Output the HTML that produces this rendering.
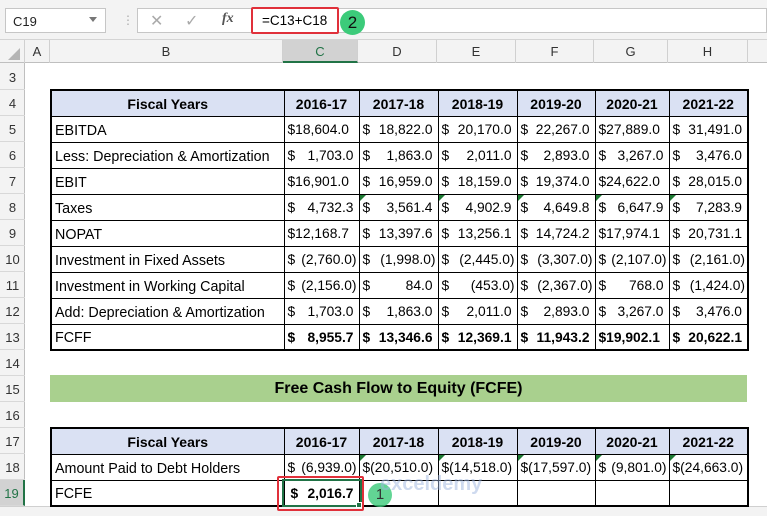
<!DOCTYPE html>
<html><head><meta charset="utf-8"><style>
*{box-sizing:border-box;margin:0;padding:0}
body{width:767px;height:516px;overflow:hidden;background:#fff;font-family:"Liberation Sans",sans-serif;position:relative}
.abs{position:absolute}
.top{left:0;top:0;width:767px;height:40px;background:#f3f3f3;border-bottom:1px solid #d4d4d4}
.namebox{left:5px;top:8px;width:101px;height:25px;background:#fff;border:1px solid #c6c6c6;font-size:13px;padding:5px 0 0 7px;color:#222}
.fbox{left:137px;top:8px;width:630px;height:25px;background:#fff;border:1px solid #c6c6c6}
.colhdr{left:0;top:40px;width:767px;height:23px;background:#f3f3f3;border-bottom:1px solid #bfbfbf}
.ch{position:absolute;top:40px;height:23px;border-right:1px solid #d0d0d0;font-size:13px;color:#333;text-align:center;line-height:23px}
.rowhdr{left:0;top:63px;width:25px;height:453px;background:#f3f3f3;border-right:1px solid #bfbfbf}
.rh{position:absolute;left:0;width:25px;height:26px;border-bottom:1px solid #d8d8d8;font-size:13px;color:#333;text-align:center;line-height:28px}
table{position:absolute;border-collapse:collapse;table-layout:fixed;font-size:14.3px;color:#000}
td{height:26px;border:1px solid #000;padding:3px 3px 0;white-space:nowrap;overflow:hidden;vertical-align:middle}
tr.h td{background:#dae1f3;font-weight:bold;text-align:center;font-size:14px;padding-top:1px}
td.n{position:relative;font-size:13.8px}
td.n span.d{position:absolute;left:3px;top:5px}
td.n span.v{position:absolute;right:5px;top:5px}
td.n span.v.neg{right:2px}
.b td{font-weight:bold}
.tri{position:absolute;left:0;top:0;width:0;height:0;border-top:6px solid #1e7b34;border-right:6px solid transparent}
</style></head><body>
<div class="abs top"></div>
<div class="abs namebox">C19</div>
<div class="abs" style="left:89px;top:17px;width:0;height:0;border-left:4px solid transparent;border-right:4px solid transparent;border-top:5px solid #777"></div>
<div class="abs" style="left:122px;top:13px;color:#aaa;font-size:12px">⋮</div>
<div class="abs fbox"></div>
<div class="abs" style="left:150px;top:11px;color:#aaa;font-size:16px">✕</div>
<div class="abs" style="left:185px;top:11px;color:#aaa;font-size:16px">✓</div>
<div class="abs" style="left:222px;top:11px;color:#555;font-size:14px;font-style:italic;font-family:'Liberation Serif',serif;font-weight:bold">fx</div>
<div class="abs" style="left:251px;top:7px;width:88px;height:27px;border:2px solid #e0303a;border-radius:2px;background:#fff;font-size:13.5px;padding:4px 0 0 9px">=C13+C18</div>
<div class="abs" style="left:340px;top:10px;width:25px;height:25px;border-radius:50%;background:#3ccb7a;font-size:17px;text-align:center;line-height:25px;color:#111">2</div>
<div class="abs colhdr"></div>
<div class="abs" style="left:0;top:40px;width:25px;height:23px;border-right:1px solid #d0d0d0"></div>
<div class="abs" style="left:8px;top:48px;width:0;height:0;border-left:12px solid transparent;border-bottom:12px solid #b5b5b5"></div>
<div class="ch" style="left:25px;width:25px">A</div>
<div class="ch" style="left:50px;width:233px">B</div>
<div class="ch" style="left:283px;width:75px;background:#d2d2d2;border-bottom:2px solid #217346;color:#217346">C</div>
<div class="ch" style="left:358px;width:79px">D</div>
<div class="ch" style="left:437px;width:79px">E</div>
<div class="ch" style="left:516px;width:78px">F</div>
<div class="ch" style="left:594px;width:74px">G</div>
<div class="ch" style="left:668px;width:80px">H</div>
<div class="abs rowhdr"></div>
<div class="rh" style="top:64px">3</div>
<div class="rh" style="top:90px">4</div>
<div class="rh" style="top:116px">5</div>
<div class="rh" style="top:142px">6</div>
<div class="rh" style="top:168px">7</div>
<div class="rh" style="top:194px">8</div>
<div class="rh" style="top:220px">9</div>
<div class="rh" style="top:246px">10</div>
<div class="rh" style="top:272px">11</div>
<div class="rh" style="top:298px">12</div>
<div class="rh" style="top:324px">13</div>
<div class="rh" style="top:350px">14</div>
<div class="rh" style="top:376px">15</div>
<div class="rh" style="top:402px">16</div>
<div class="rh" style="top:428px">17</div>
<div class="rh" style="top:454px">18</div>
<div class="rh" style="top:480px;background:#d2d2d2;color:#217346;border-right:2px solid #217346">19</div>
<div class="abs" style="left:0;top:506px;width:767px;height:10px;background:#f3f3f3;border-top:1px solid #d0d0d0"></div>

<table style="left:50px;top:89px;width:697px;border:2px solid #000">
<colgroup><col style="width:233px"><col style="width:75px"><col style="width:79px"><col style="width:79px"><col style="width:78px"><col style="width:74px"><col style="width:79px"></colgroup>
<tr class="h"><td>Fiscal Years</td><td>2016-17</td><td>2017-18</td><td>2018-19</td><td>2019-20</td><td>2020-21</td><td>2021-22</td></tr>
<tr><td>EBITDA</td><td class="n"><span class="d">$18,604.0</span></td><td class="n"><span class="d">$</span><span class="v">18,822.0</span></td><td class="n"><span class="d">$</span><span class="v">20,170.0</span></td><td class="n"><span class="d">$</span><span class="v">22,267.0</span></td><td class="n"><span class="d">$27,889.0</span></td><td class="n"><span class="d">$</span><span class="v">31,491.0</span></td></tr>
<tr><td>Less: Depreciation &amp; Amortization</td><td class="n"><span class="d">$</span><span class="v">1,703.0</span></td><td class="n"><span class="d">$</span><span class="v">1,863.0</span></td><td class="n"><span class="d">$</span><span class="v">2,011.0</span></td><td class="n"><span class="d">$</span><span class="v">2,893.0</span></td><td class="n"><span class="d">$</span><span class="v">3,267.0</span></td><td class="n"><span class="d">$</span><span class="v">3,476.0</span></td></tr>
<tr><td>EBIT</td><td class="n"><span class="d">$16,901.0</span></td><td class="n"><span class="d">$</span><span class="v">16,959.0</span></td><td class="n"><span class="d">$</span><span class="v">18,159.0</span></td><td class="n"><span class="d">$</span><span class="v">19,374.0</span></td><td class="n"><span class="d">$24,622.0</span></td><td class="n"><span class="d">$</span><span class="v">28,015.0</span></td></tr>
<tr><td>Taxes</td><td class="n"><span class="d">$</span><span class="v">4,732.3</span></td><td class="n"><i class="tri"></i><span class="d">$</span><span class="v">3,561.4</span></td><td class="n"><i class="tri"></i><span class="d">$</span><span class="v">4,902.9</span></td><td class="n"><i class="tri"></i><span class="d">$</span><span class="v">4,649.8</span></td><td class="n"><i class="tri"></i><span class="d">$</span><span class="v">6,647.9</span></td><td class="n"><i class="tri"></i><span class="d">$</span><span class="v">7,283.9</span></td></tr>
<tr><td>NOPAT</td><td class="n"><span class="d">$12,168.7</span></td><td class="n"><span class="d">$</span><span class="v">13,397.6</span></td><td class="n"><span class="d">$</span><span class="v">13,256.1</span></td><td class="n"><span class="d">$</span><span class="v">14,724.2</span></td><td class="n"><span class="d">$17,974.1</span></td><td class="n"><span class="d">$</span><span class="v">20,731.1</span></td></tr>
<tr><td>Investment in Fixed Assets</td><td class="n"><span class="d">$</span><span class="v neg">(2,760.0)</span></td><td class="n"><span class="d">$</span><span class="v neg">(1,998.0)</span></td><td class="n"><span class="d">$</span><span class="v neg">(2,445.0)</span></td><td class="n"><span class="d">$</span><span class="v neg">(3,307.0)</span></td><td class="n"><span class="d">$</span><span class="v neg">(2,107.0)</span></td><td class="n"><span class="d">$</span><span class="v neg">(2,161.0)</span></td></tr>
<tr><td>Investment in Working Capital</td><td class="n"><span class="d">$</span><span class="v neg">(2,156.0)</span></td><td class="n"><span class="d">$</span><span class="v">84.0</span></td><td class="n"><span class="d">$</span><span class="v neg">(453.0)</span></td><td class="n"><span class="d">$</span><span class="v neg">(2,367.0)</span></td><td class="n"><span class="d">$</span><span class="v">768.0</span></td><td class="n"><span class="d">$</span><span class="v neg">(1,424.0)</span></td></tr>
<tr><td>Add: Depreciation &amp; Amortization</td><td class="n"><span class="d">$</span><span class="v">1,703.0</span></td><td class="n"><span class="d">$</span><span class="v">1,863.0</span></td><td class="n"><span class="d">$</span><span class="v">2,011.0</span></td><td class="n"><span class="d">$</span><span class="v">2,893.0</span></td><td class="n"><span class="d">$</span><span class="v">3,267.0</span></td><td class="n"><span class="d">$</span><span class="v">3,476.0</span></td></tr>
<tr class="b"><td style="font-weight:normal">FCFF</td><td class="n"><span class="d">$</span><span class="v">8,955.7</span></td><td class="n"><span class="d">$</span><span class="v">13,346.6</span></td><td class="n"><span class="d">$</span><span class="v">12,369.1</span></td><td class="n"><span class="d">$</span><span class="v">11,943.2</span></td><td class="n"><span class="d">$19,902.1</span></td><td class="n"><span class="d">$</span><span class="v">20,622.1</span></td></tr>
</table>

<div class="abs" style="left:50px;top:375px;width:697px;height:27px;background:#a9d08e;font-weight:bold;font-size:16px;text-align:center;line-height:27px">Free Cash Flow to Equity (FCFE)</div>

<table style="left:50px;top:427px;width:697px;border:2px solid #000">
<colgroup><col style="width:233px"><col style="width:75px"><col style="width:79px"><col style="width:79px"><col style="width:78px"><col style="width:74px"><col style="width:79px"></colgroup>
<tr class="h"><td>Fiscal Years</td><td>2016-17</td><td>2017-18</td><td>2018-19</td><td>2019-20</td><td>2020-21</td><td>2021-22</td></tr>
<tr><td>Amount Paid to Debt Holders</td><td class="n"><span class="d">$</span><span class="v neg">(6,939.0)</span></td><td class="n"><i class="tri"></i><span class="d">$(20,510.0)</span></td><td class="n"><i class="tri"></i><span class="d">$(14,518.0)</span></td><td class="n"><i class="tri"></i><span class="d">$(17,597.0)</span></td><td class="n"><i class="tri"></i><span class="d">$</span><span class="v neg">(9,801.0)</span></td><td class="n"><i class="tri"></i><span class="d">$(24,663.0)</span></td></tr>
<tr class="b"><td style="font-weight:normal">FCFE</td><td class="n"><span class="d" style="left:6px">$</span><span class="v">2,016.7</span></td><td></td><td></td><td></td><td></td><td></td></tr>
</table>
<div class="abs" style="left:282px;top:479px;width:80px;height:28px;border:2px solid #217346"></div>
<div class="abs" style="left:356px;top:502px;width:6px;height:6px;background:#217346;border:1px solid #fff"></div>
<div class="abs" style="left:277px;top:476px;width:87px;height:35px;border:2px solid #e0303a;border-radius:2px"></div>
<div class="abs" style="left:368px;top:483px;width:24px;height:24px;border-radius:50%;background:#3ccb7a;opacity:.8;font-size:15px;text-align:center;line-height:24px">1</div>
<div class="abs" style="left:380px;top:473px;font-size:20px;font-weight:bold;color:#9fb6e0;opacity:.5">exceldemy</div>
</body></html>
